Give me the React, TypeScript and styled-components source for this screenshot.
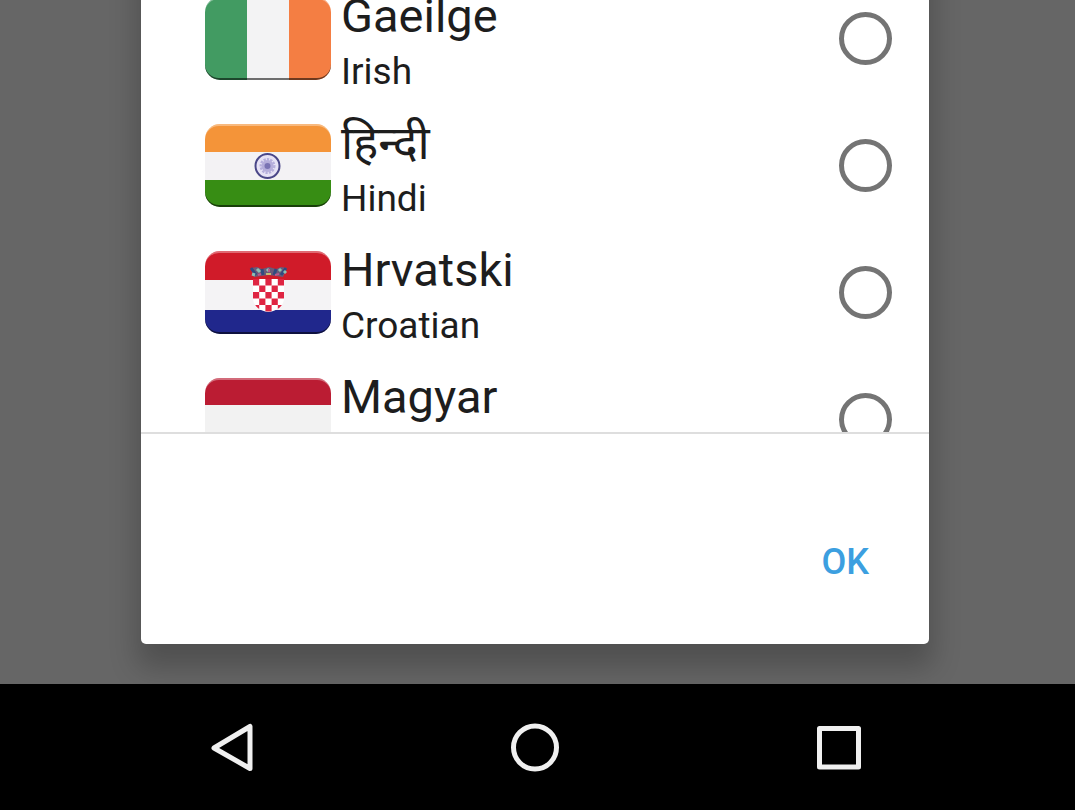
import React from "react";
import styled, { createGlobalStyle } from "styled-components";

const GlobalStyle = createGlobalStyle`
  *, *::before, *::after { box-sizing: border-box; }
  body {
    margin: 0;
    background: #666666;
    font-family: Roboto, "Noto Sans", sans-serif;
    color: #1d1d1d;
  }
`;

const Screen = styled.div`
  display: flex;
  flex-direction: column;
  min-height: 100vh;
  overflow: hidden;
`;

const Stage = styled.main`
  flex: 1;
  display: flex;
  padding: 0 146px 40px 141px;
  overflow: hidden;
`;

const Dialog = styled.form`
  flex: 1;
  min-width: 0;
  display: flex;
  flex-direction: column;
  margin-top: -65px;
  padding-top: 40px;
  background: #ffffff;
  border-radius: 5px;
  box-shadow: 0 20px 28px 4px rgba(0, 0, 0, 0.22);
`;

const List = styled.div`
  height: 459px;
  overflow: hidden;
  border-bottom: 2px solid #dedede;
`;

const Row = styled.label`
  display: flex;
  align-items: center;
  height: 127px;
  padding: 0 37px 0 64px;
  cursor: pointer;
`;

const Flag = styled.svg`
  flex: none;
  width: 126px;
  height: 83px;
  margin-right: 10px;
`;

const Names = styled.span`
  flex: 1;
  display: flex;
  flex-direction: column;
  gap: 6px;
  padding-top: 4px;
`;

const NativeName = styled.span`
  font-size: 47px;
  line-height: 56px;
`;

const EnglishName = styled.span`
  height: 44px;
  font-size: 37px;
  line-height: 44px;
`;

const Radio = styled.input`
  appearance: none;
  flex: none;
  width: 53px;
  height: 53px;
  margin: 0;
  border: 5px solid #747474;
  border-radius: 50%;
  background: #ffffff;
  &:checked {
    border-color: #3a9fe0;
    box-shadow: inset 0 0 0 8px #ffffff;
    background: #3a9fe0;
  }
`;

const Actions = styled.div`
  flex: 1;
  display: flex;
  justify-content: flex-end;
  align-items: center;
  padding: 46px 36px 0 0;
`;

const TextButton = styled.button`
  padding: 12px 24px;
  border: 0;
  background: none;
  color: #3c9fe0;
  font-family: inherit;
  font-size: 36px;
  font-weight: 500;
  line-height: 44px;
  cursor: pointer;
`;

const NavBar = styled.nav`
  display: flex;
  justify-content: center;
  height: 126px;
  padding-right: 6px;
  background: #000000;
`;

const NavButton = styled.button`
  flex: 0 1 304px;
  display: flex;
  align-items: center;
  justify-content: center;
  padding: 0;
  border: 0;
  background: none;
  cursor: pointer;
`;

const NavIcon = styled.svg`
  width: 52px;
  height: 52px;
  fill: none;
  stroke: #f0f0f0;
  stroke-width: 5;
  stroke-linejoin: round;
`;

const IrishFlag = () => (
  <>
    <rect width="42" height="83" fill="#429b62" />
    <rect x="42" width="42" height="83" fill="#f3f3f4" />
    <rect x="84" width="42" height="83" fill="#f47e43" />
  </>
);

const IndianFlag = () => (
  <>
    <rect width="126" height="28" fill="#f49439" />
    <rect y="28" width="126" height="28" fill="#f3f2f4" />
    <rect y="56" width="126" height="27" fill="#378d14" />
    <circle cx="62.5" cy="42" r="12" fill="#e6e2f5" stroke="#4a4788" strokeWidth="2" />
    <circle cx="62.5" cy="42" r="6" fill="#b4acd9" stroke="#b6afdc" strokeWidth="4" strokeDasharray="2 1" />
    <circle cx="62.5" cy="42" r="3" fill="#7a73b3" />
  </>
);

const shieldCells = Array.from({ length: 25 }, (_, i) => ({ col: i % 5, row: Math.floor(i / 5) }));

const CroatianFlag = () => (
  <>
    <rect width="126" height="29" fill="#d01b29" />
    <rect y="29" width="126" height="30" fill="#f4f3f5" />
    <rect y="59" width="126" height="24" fill="#20278c" />
    <clipPath id="shield">
      <path d="M48 28h31v19c0 8-7 13-15.500 14C55 60 48 55 48 47z" />
    </clipPath>
    <g clipPath="url(#shield)">
      <rect x="48" y="28" width="31" height="34" fill="#fff" />
      {shieldCells
        .filter(({ col, row }) => (col + row) % 2 === 0)
        .map(({ col, row }) => (
          <rect key={`${col}-${row}`} x={48 + col * 6.2} y={28 + row * 6.5} width="6.2" height="6.5" fill="#df2442" />
        ))}
    </g>
    <path d="M49 26l-3-9 6-1 5 2 7-2 7 2 5-2 6 1-4 9-7-1-7-1-8 1z" fill="#6b5a78" />
    <path d="M46 17l5 7M57 18l1 6M71 18l-2 6M81 17l-5 7" stroke="#2f4a80" strokeWidth="3" />
    <path d="M47 23l3 1M52 18l3 3M62 18l2 2M74 18l2 2M79 22l2-2" stroke="#8cc0b4" strokeWidth="3" />
    <path d="M53 24l3-1M70 24l4-1M64 18v3" stroke="#b85a8c" strokeWidth="2" />
    <path d="M61 23h5" stroke="#c3bb74" strokeWidth="2" />
  </>
);

const HungarianFlag = () => (
  <>
    <rect width="126" height="27" fill="#bb1c33" />
    <rect y="27" width="126" height="29" fill="#f2f2f2" />
    <rect y="56" width="126" height="27" fill="#3c7d4b" />
  </>
);

const languages = [
  { code: "ga", native: "Gaeilge", english: "Irish", Art: IrishFlag },
  { code: "hi", native: "हिन्दी", english: "Hindi", Art: IndianFlag },
  { code: "hr", native: "Hrvatski", english: "Croatian", Art: CroatianFlag },
  { code: "hu", native: "Magyar", english: "", Art: HungarianFlag },
];

export default function App() {
  return (
    <>
      <GlobalStyle />
      <Screen>
        <Stage>
          <Dialog onSubmit={(e) => e.preventDefault()}>
            <List role="radiogroup">
              {languages.map(({ code, native, english, Art }) => (
                <Row key={code} htmlFor={code}>
                  <Flag viewBox="0 0 126 83" aria-hidden="true">
                    <clipPath id={`flag-${code}`}>
                      <rect width="126" height="83" rx="15" />
                    </clipPath>
                    <g clipPath={`url(#flag-${code})`}>
                      <Art />
                      <path d="M0 67a14 14 0 0 0 14 14h98a14 14 0 0 0 14-14v16H0z" fill="#000" opacity="0.55" />
                      <path d="M0 16A14 14 0 0 1 14 2h98a14 14 0 0 1 14 14V0H0z" fill="#fff" opacity="0.35" />
                    </g>
                  </Flag>
                  <Names>
                    <NativeName lang={code}>{native}</NativeName>
                    <EnglishName>{english}</EnglishName>
                  </Names>
                  <Radio type="radio" name="language" id={code} value={code} />
                </Row>
              ))}
            </List>
            <Actions>
              <TextButton type="submit">OK</TextButton>
            </Actions>
          </Dialog>
        </Stage>
        <NavBar>
          <NavButton type="button" aria-label="Back">
            <NavIcon viewBox="0 0 52 52">
              <path d="M45 5.500v42L9 27z" />
            </NavIcon>
          </NavButton>
          <NavButton type="button" aria-label="Home">
            <NavIcon viewBox="0 0 52 52">
              <circle cx="26" cy="26.500" r="21.500" />
            </NavIcon>
          </NavButton>
          <NavButton type="button" aria-label="Recent apps">
            <NavIcon viewBox="0 0 52 52">
              <rect x="6.500" y="7.500" width="39" height="38.500" />
            </NavIcon>
          </NavButton>
        </NavBar>
      </Screen>
    </>
  );
}
